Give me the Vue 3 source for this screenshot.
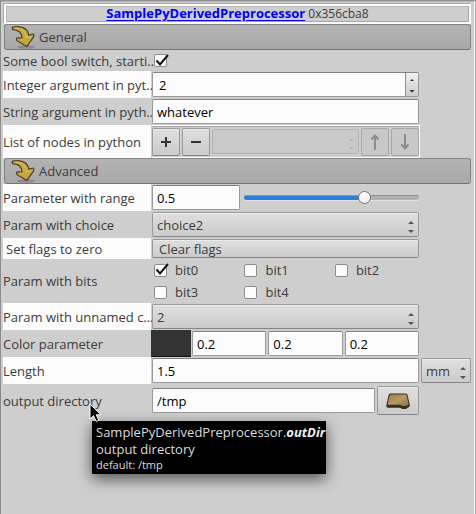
<script setup>
import { ref, computed } from 'vue'

const autoSwitch = ref(true)
const count = ref('2')
const text = ref('whatever')
const amount = ref(0.5)
const maxAmount = 0.71
const choice = ref('choice2')
const unnamed = ref('2')
const bits = ref([true, false, false, false, false])
const rgb = ref(['0.2', '0.2', '0.2'])
const length = ref('1.5')
const unit = ref('mm')
const outDir = ref('/tmp')
const fill = computed(() => ({ '--fill': (amount.value / maxAmount) * 100 + '%' }))
</script>

<template>
  <main class="panel">
    <h1 class="title"><a href="#">SamplePyDerivedPreprocessor</a>&nbsp;0x356cba8</h1>

    <button class="section" type="button">
      <svg class="fold" viewBox="0 0 24 24" aria-hidden="true">
        <ellipse cx="15" cy="22" rx="9" ry="1.6" fill="#777" opacity=".6" />
        <path d="M1.200 2.400C8 .2 17 2.600 17.800 10.200L22.600 9 22.800 11.600 15.800 21.400 5.800 15.500 5.600 13.200 11 12.600C10.500 7.500 6.500 4.800 1.500 4.600Z" fill="#c7a544" stroke="#4b4022" stroke-width="1.200" stroke-linejoin="round" />
        <path d="M4 3C11 3 14.500 6 15 12.500L20 11.500" fill="none" stroke="#e0c469" />
      </svg>
      <span>General</span>
    </button>

    <div class="row short">
      <label class="name" for="switch">Some bool switch, starti…</label>
      <div class="cell">
        <span class="check">
          <input id="switch" v-model="autoSwitch" type="checkbox">
          <svg v-if="autoSwitch" viewBox="0 0 16 16" aria-hidden="true"><path d="M2.500 7.500 6 11.500 14 2" /></svg>
        </span>
      </div>
    </div>

    <div class="row">
      <label class="name light" for="count">Integer argument in pyt…</label>
      <div class="cell">
        <div class="spin">
          <input id="count" v-model="count" class="field" type="text">
          <span class="steps" aria-hidden="true"><svg viewBox="0 0 6 14"><path d="M1 3 3 1 5 3ZM.5 12 3 14.500 5.500 12Z" /></svg></span>
        </div>
      </div>
    </div>

    <div class="row">
      <label class="name" for="text">String argument in pyth…</label>
      <div class="cell"><input id="text" v-model="text" class="field" type="text"></div>
    </div>

    <div class="row tall">
      <label class="name light" for="nodes">List of nodes in python</label>
      <div class="cell list">
        <button class="btn tool" type="button" aria-label="Add">
          <svg viewBox="0 0 16 16"><path d="M8 3V13M3 8H13" /></svg>
        </button>
        <button class="btn tool" type="button" aria-label="Remove">
          <svg viewBox="0 0 16 16"><path d="M3 8H13" /></svg>
        </button>
        <span class="pick off">
          <select id="nodes" disabled></select>
          <svg viewBox="0 0 6 12" aria-hidden="true"><path d="M0 3 3 0 6 3ZM0 9 3 12 6 9Z" /></svg>
        </span>
        <button class="btn tool faded" type="button" aria-label="Move up" disabled>
          <svg viewBox="0 0 16 16"><path d="M8 16V2M4.500 5.500 8 1.500 11.500 5.500" /></svg>
        </button>
        <button class="btn tool faded" type="button" aria-label="Move down" disabled>
          <svg viewBox="0 0 16 16"><path d="M8 0V14M4.500 10.500 8 14.500 11.500 10.500" /></svg>
        </button>
      </div>
    </div>

    <button class="section" type="button">
      <svg class="fold" viewBox="0 0 24 24" aria-hidden="true">
        <ellipse cx="15" cy="22" rx="9" ry="1.6" fill="#777" opacity=".6" />
        <path d="M1.200 2.400C8 .2 17 2.600 17.800 10.200L22.600 9 22.800 11.600 15.800 21.400 5.800 15.500 5.600 13.200 11 12.600C10.500 7.500 6.500 4.800 1.500 4.600Z" fill="#c7a544" stroke="#4b4022" stroke-width="1.200" stroke-linejoin="round" />
        <path d="M4 3C11 3 14.500 6 15 12.500L20 11.500" fill="none" stroke="#e0c469" />
      </svg>
      <span>Advanced</span>
    </button>

    <div class="row">
      <label class="name light" for="amount">Parameter with range</label>
      <div class="cell range">
        <input id="amount" v-model="amount" class="field" type="text">
        <input v-model="amount" class="slider" :style="fill" type="range" min="0" :max="maxAmount" step="0.01" aria-label="Parameter with range">
      </div>
    </div>

    <div class="row">
      <label class="name" for="choice">Param with choice</label>
      <div class="cell">
        <span class="pick">
          <select id="choice" v-model="choice"><option>choice2</option></select>
          <svg viewBox="0 0 6 12" aria-hidden="true"><path d="M0 3 3 0 6 3ZM0 9 3 12 6 9Z" /></svg>
        </span>
      </div>
    </div>

    <div class="row short">
      <label class="name light indent" for="clear">Set flags to zero</label>
      <div class="cell"><button id="clear" class="btn wide" type="button">Clear flags</button></div>
    </div>

    <div class="row">
      <span class="name">Param with bits</span>
      <div class="cell bits">
        <label v-for="(on, i) in bits" :key="i" class="bit">
          <span class="check">
            <input v-model="bits[i]" type="checkbox">
            <svg v-if="on" viewBox="0 0 16 16" aria-hidden="true"><path d="M2.500 7.500 6 11.500 14 2" /></svg>
          </span>
          bit{{ i }}
        </label>
      </div>
    </div>

    <div class="row">
      <label class="name light" for="unnamed">Param with unnamed c…</label>
      <div class="cell">
        <span class="pick">
          <select id="unnamed" v-model="unnamed"><option>2</option></select>
          <svg viewBox="0 0 6 12" aria-hidden="true"><path d="M0 3 3 0 6 3ZM0 9 3 12 6 9Z" /></svg>
        </span>
      </div>
    </div>

    <div class="row">
      <label class="name" for="rgb0">Color parameter</label>
      <div class="cell color">
        <span class="swatch"></span>
        <input v-for="(c, i) in rgb" :id="'rgb' + i" :key="i" v-model="rgb[i]" class="field" type="text">
      </div>
    </div>

    <div class="row">
      <label class="name light" for="length">Length</label>
      <div class="cell"><input id="length" v-model="length" class="field" type="text"></div>
      <span class="pick unit">
        <select v-model="unit" aria-label="Length unit"><option>mm</option></select>
        <svg viewBox="0 0 6 12" aria-hidden="true"><path d="M0 3 3 0 6 3ZM0 9 3 12 6 9Z" /></svg>
      </span>
    </div>

    <div class="row tall">
      <div class="name anchor">
        <label for="dir">output directory</label>
        <div class="tip" role="tooltip">
          <div>SamplePyDerivedPreprocessor.<b><i>outDir</i></b></div>
          <div>output directory</div>
          <small>default: /tmp</small>
        </div>
        <svg class="cursor" viewBox="0 0 13 20" aria-hidden="true">
          <path d="M1 1V16L4.500 12.700 7.200 18.500 9.800 17.300 7.200 11.800H12Z" />
        </svg>
      </div>
      <div class="cell file">
        <input id="dir" v-model="outDir" class="field" type="text">
        <button class="btn browse" type="button" aria-label="Browse">
          <svg viewBox="0 0 24 16">
            <defs>
              <linearGradient id="hide" x1="0" y1="0" x2="1" y2="1">
                <stop offset="0" stop-color="#94794c" />
                <stop offset=".5" stop-color="#b89b64" />
                <stop offset="1" stop-color="#8b7045" />
              </linearGradient>
            </defs>
            <path d="M4 .5H20Q21.300 .5 21.600 2L23.700 11.500Q24 14.500 22 14.500L20 16H16.500L14 14.800H2Q0 14.800 .4 12L2.600 2Q3 .5 4 .5Z" fill="#392d1d" />
            <path d="M4.200 1.500H19.800Q20.600 1.500 20.800 2.500L22.600 11.500 20 13H16.500L14 11.800H1.600L3.500 2.300Z" fill="url(#hide)" />
          </svg>
        </button>
      </div>
    </div>
  </main>
</template>

<style>
body { margin: 0; background: #cecece; }
</style>

<style scoped>
* { box-sizing: border-box; }
.panel {
  min-height: 100vh;
  padding: 3px 4px 0 2px;
  border-left: 1px solid #8c8c8c;
  border-top: 1px solid #909090;
  border-right: 1px solid #acacac;
  box-shadow: inset -1px 0 #f8f8f8, inset 0 1px #b4b4b4;
  background: #cecece;
  color: #3c3c3c;
  font: 13px/18px "Open Sans", "Noto Sans", sans-serif;
}
input, select, button { font: inherit; color: inherit; margin: 0; min-width: 0; }
.title {
  margin: 0 0 0 1px;
  height: 20px;
  border: 2px solid #fcfcfc;
  box-shadow: inset -1px -1px #a8a8a8, inset 1px 1px #b8b8b8, -1px -1px #aaa;
  font: inherit;
  font-size: 12px;
  line-height: 15px;
  text-align: center;
}
.title a { color: #00f; font-weight: 700; font-size: 13px; text-underline-offset: 2px; }
.section {
  display: flex;
  align-items: center;
  gap: 4px;
  width: calc(100% - 1px);
  height: 26px;
  margin: 0 0 0 1px;
  padding: 0 6px;
  border: 1px solid #838383;
  border-bottom-color: #747474;
  border-radius: 3px;
  background: linear-gradient(#b3b3b3, #a9a9a9);
}
.fold { width: 24px; height: 24px; }
.row {
  display: grid;
  grid-template-columns: 148px minmax(0, 1fr) 50px;
  column-gap: 1px;
  min-height: 27px;
}
.row.short { min-height: 21px; }
.row.tall { min-height: 33px; }
.name { display: flex; align-items: center; white-space: nowrap; }
.light { background: #fcfcfc; }
.indent { padding-left: 3px; }
.cell { display: flex; align-items: center; padding: 1px 1px 1px 0; }
.field {
  flex: 1;
  width: 100%;
  height: 25px;
  padding: 0 4px;
  border: 1px solid #9a9a9a;
  border-top-color: #828282;
  border-radius: 2px;
  background: #fcfcfc;
  color: #000;
}
.spin { flex: 1; display: grid; grid-template-columns: 1fr 14px; }
.spin .field { grid-area: 1 / 1 / 2 / 3; padding-left: 6px; }
.steps {
  grid-area: 1 / 2;
  display: grid;
  place-items: center;
  margin: 1px 1px 1px 0;
  border-left: 1px solid #909090;
  background: linear-gradient(#f0f0f0, #cccccc);
}
.steps svg { width: 6px; height: 14px; overflow: visible; fill: #333; }
.btn, .pick select {
  border: 1px solid #9a9a9a;
  border-bottom-color: #858585;
  border-radius: 2px;
  background: linear-gradient(#dfdfdf, #cbcbcb);
  box-shadow: inset 0 1px #ececec;
}
.btn { display: grid; place-items: center; padding: 0; }
.wide { flex: 1; height: 19px; justify-items: start; padding-left: 6px; line-height: 16px; }
.pick { flex: 1; display: grid; min-width: 0; }
.pick select { grid-area: 1 / 1; appearance: none; width: 100%; height: 25px; padding: 0 4px; }
.pick svg {
  grid-area: 1 / 1;
  place-self: center end;
  width: 6px;
  height: 12px;
  margin: 4px 5px 0 0;
  fill: #555;
  pointer-events: none;
}
.unit { align-self: center; }
.list {
  gap: 2px;
  padding: 0;
  border: 1px solid #fcfcfc;
  border-left: 0;
  box-shadow: inset 0 1px #aaa;
}
.tool { width: 28px; height: 28px; }
.tool svg { width: 16px; height: 16px; fill: none; stroke: #333; stroke-width: 2; }
.btn.faded, .off select { background: #c8c8c8; border-color: #a8a8a8; box-shadow: none; }
.faded svg { stroke: #8d8d8d; }
.off svg { fill: #999; }
.check { display: grid; width: 16px; height: 16px; align-items: center; flex: none; }
.check input {
  grid-area: 1 / 1;
  appearance: none;
  width: 13px;
  height: 13px;
  border: 1px solid #8c8c8c;
  border-radius: 2px;
  background: #fcfcfc;
}
.check svg { grid-area: 1 / 1; width: 16px; height: 16px; fill: none; stroke: #111; stroke-width: 2; pointer-events: none; }
.short .check { margin-left: 2px; }
.range { display: grid; grid-template-columns: 1fr 2fr; gap: 4px; }
.slider {
  width: 100%;
  appearance: none;
  height: 14px;
  background: none;
}
.slider::-webkit-slider-runnable-track {
  height: 5px;
  border-radius: 2px;
  border-top: 1px solid #7779;
  background: linear-gradient(#2a82dc, #2a82dc) 0 0 / var(--fill) 100% no-repeat #b1b1b1;
  box-shadow: 0 1px #e2e2e2;
}
.slider::-webkit-slider-thumb {
  appearance: none;
  width: 13px;
  height: 13px;
  margin-top: -5px;
  border: 1px solid #777;
  border-radius: 50%;
  background: linear-gradient(#fff, #eee);
}
.bits {
  display: grid;
  grid-template-columns: 34% 34% 1fr;
  grid-auto-rows: 22px;
  padding: 0 0 0 2px;
}
.bit { display: flex; align-items: center; gap: 5px; }
.color { gap: 2px; }
.swatch { width: 40px; align-self: stretch; margin: -1px; background: #333; border-bottom: 1px solid #111; }
.file { gap: 2px; }
.browse { width: 42px; height: 29px; }
.browse svg { width: 24px; height: 16px; }
.anchor { position: relative; }
.tip {
  position: absolute;
  left: 89px;
  top: 37px;
  z-index: 1;
  width: 234px;
  padding: 3px 4px;
  background: #000;
  color: #dcdcdc;
  line-height: 17px;
  white-space: nowrap;
  box-shadow: 0 5px 14px #0009;
}
.tip b { color: #eee; }
.tip small { display: block; font-size: 11px; line-height: 13px; }
.cursor {
  position: absolute;
  left: 86px;
  top: 19px;
  z-index: 2;
  width: 13px;
  height: 20px;
  fill: #000;
  stroke: #fff;
}
</style>
